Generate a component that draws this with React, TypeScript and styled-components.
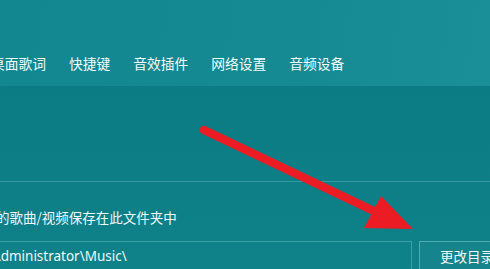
import styled, { createGlobalStyle } from 'styled-components';

const GlobalStyle = createGlobalStyle`
  html, body {
    margin: 0;
    padding: 0;
    overflow: hidden;
    background: #0c7c84;
  }
`;

const tabs = ['桌面歌词', '快捷键', '音效插件', '网络设置', '音频设备'];

const App = () => {
  return (
    <Window>
      <GlobalStyle />
      <Header>
        <TabList>
          {tabs.map((t) => (
            <Tab key={t}>{t}</Tab>
          ))}
        </TabList>
      </Header>
      <Body>
        <Divider />
        <Label>的歌曲/视频保存在此文件夹中</Label>
        <PathRow>
          <PathInput>Administrator\Music\</PathInput>
          <ChangeButton>更改目录</ChangeButton>
        </PathRow>
      </Body>
      {/* red annotation arrow drawn over the screenshot */}
      <Arrow viewBox="0 0 490 269" width="490" height="269">
        <line x1="204" y1="130" x2="378" y2="213" stroke="#ec1c24" strokeWidth="8.5" strokeLinecap="round" />
        <polygon points="381,196 413,229 364,228" fill="#ec1c24" />
      </Arrow>
    </Window>
  );
};

const Window = styled.div`
  position: relative;
  width: 490px;
  height: 269px;
  overflow: hidden;
  font-family: 'Noto Sans', 'Noto Sans CJK SC', sans-serif;
  color: #ffffff;
  background: linear-gradient(180deg, #0a7a82 0%, #0d7e86 60%, #0f8189 100%);
`;

const Header = styled.div`
  height: 86px;
  display: flex;
  align-items: flex-end;
  background: linear-gradient(100deg, #12878f 0%, #168a92 60%, #1b8f97 100%);
`;

const TabList = styled.div`
  display: flex;
  gap: 23px;
  margin-left: -9px;
  height: 33px;
  align-items: flex-start;
`;

const Tab = styled.div`
  font-family: 'Noto Sans CJK SC', sans-serif;
  font-size: 13.75px;
  line-height: 20px;
  color: #f2fafa;
  white-space: nowrap;
`;

const Body = styled.div`
  display: flex;
  flex-direction: column;
`;

const Divider = styled.div`
  margin-top: 95px;
  height: 1px;
  width: 100%;
  background: rgba(120, 200, 205, 0.35);
`;

const Label = styled.div`
  margin-top: 26px;
  margin-left: -4px;
  font-family: 'Noto Sans CJK SC', sans-serif;
  font-size: 13.5px;
  line-height: 18px;
  color: #eef8f8;
  white-space: nowrap;
`;

const PathRow = styled.div`
  display: flex;
  gap: 7px;
  margin-top: 15px;
  margin-left: -12px;
`;

const PathInput = styled.div`
  width: 424px;
  height: 30px;
  flex-shrink: 0;
  box-sizing: border-box;
  border: 1px solid rgba(110, 190, 195, 0.5);
  padding: 4px 0 0 3px;
  font-family: 'Noto Sans', sans-serif;
  font-size: 13.5px;
  line-height: 20px;
  color: #eef8f8;
  white-space: nowrap;
`;

const ChangeButton = styled.div`
  width: 82px;
  height: 30px;
  box-sizing: border-box;
  border: 1px solid rgba(120, 195, 200, 0.6);
  background: rgba(255, 255, 255, 0.03);
  padding: 4px 0 0 20px;
  font-family: 'Noto Sans CJK SC', sans-serif;
  font-size: 13.5px;
  line-height: 20px;
  color: #eef8f8;
  white-space: nowrap;
  flex-shrink: 0;
`;

const Arrow = styled.svg`
  position: absolute;
  left: 0;
  top: 0;
  pointer-events: none;
`;

export default App;
